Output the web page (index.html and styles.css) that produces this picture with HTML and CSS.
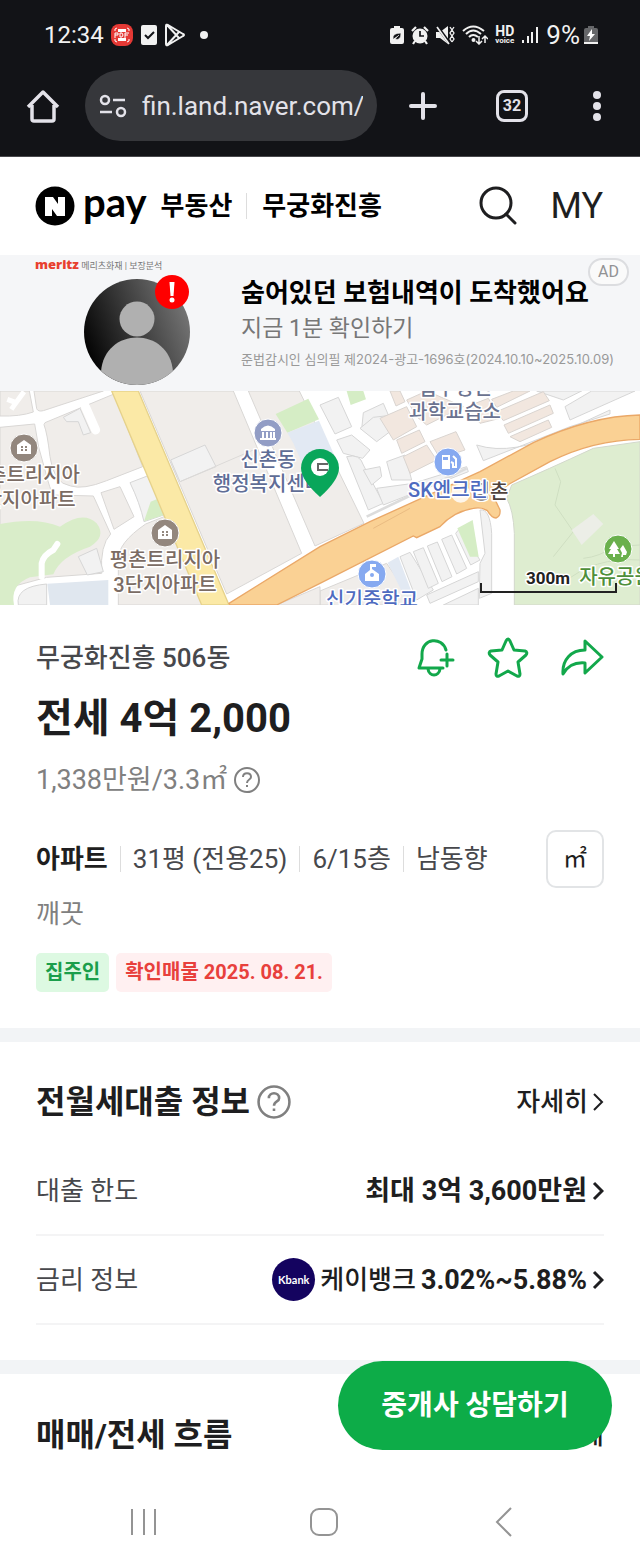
FILE: index.html
```html
<!DOCTYPE html>
<html lang="ko">
<head>
    <meta charset="UTF-8">
    <meta name="viewport" content="width=device-width, initial-scale=1.0">
    <title>무궁화진흥 506동</title>
    <link rel="stylesheet" href="styles.css">
</head>
<body>

<div class="browser">
    <div class="status-bar">
        <div class="status-left">
            <span>12:34</span>
            <svg width="24" height="24" viewBox="0 0 24 24">
                <rect x="1" y="1" width="22" height="22" rx="8" fill="#e53935"/>
                <path d="M5 8V6l2-1M17 5l2 1v2M5 16v2l2 1M17 19l2-1v-2" fill="none" stroke="#fff"/>
                <path d="M8 6h8v3H8zM8 15h8v3H8z" fill="#fff"/>
                <path d="M5 15v-5h3v2H5M10 10v4h2l1-2-1-2zM15 15v-5h4M15 12h3" fill="none" stroke="#fff"/>
            </svg>
            <svg width="18" height="22" viewBox="0 0 18 22">
                <rect x="1" y="1" width="16" height="20" rx="2" fill="#f1f1f1"/>
                <path d="M5 11l3 3 6-6" fill="none" stroke="#121317" stroke-width="2"/>
            </svg>
            <svg class="play" width="22" height="24" viewBox="0 0 22 24" fill="none" stroke="#f1f1f1" stroke-width="2" stroke-linejoin="round">
                <path d="M2 3q0-2 2-1l15 9q2 1 0 2L4 22q-2 1-2-1zM3 2l12 13M3 22L15 9"/>
            </svg>
            <svg width="8" height="8" viewBox="0 0 8 8"><circle cx="4" cy="4" r="4" fill="#f1f1f1"/></svg>
        </div>
        <div class="status-right">
            <svg width="14" height="20" viewBox="0 0 14 20">
                <path d="M4 1h6v2h2q2 0 2 2v12q0 2-2 2H2q-2 0-2-2V5q0-2 2-2h2z" fill="#f1f1f1"/>
                <path d="M3 14q-1-6 8-6 0 8-6 6l4-4" fill="#121317" stroke="#f1f1f1" stroke-width=".7"/>
            </svg>
            <svg width="18" height="20" viewBox="0 0 18 20">
                <circle cx="9" cy="11" r="7.5" fill="#f1f1f1"/>
                <path d="M1 6l4-4M17 6l-4-4M4 16l-2 3M14 16l2 3" stroke="#f1f1f1" stroke-width="2.2"/>
                <path d="M9 6v5h4" fill="none" stroke="#121317" stroke-width="1.7"/>
            </svg>
            <svg width="19" height="20" viewBox="0 0 19 20">
                <path d="M0 7h4l8-6v18l-8-6H0z" fill="#f1f1f1"/>
                <path d="M1 1l13 18" stroke="#121317" stroke-width="3"/>
                <path d="M1 2l12 17" stroke="#f1f1f1" stroke-width="1.7"/>
                <path d="M14 2l2 3-2 3 2 3-2 3 2 3M18 2l-2 3 2 3-2 3 2 3-2 3" fill="none" stroke="#f1f1f1" stroke-width="1.3"/>
            </svg>
            <svg width="26" height="20" viewBox="0 0 26 20" fill="none" stroke="#f1f1f1" stroke-width="2">
                <path d="M1 6q10-9 21 0M4 9q7-7 15 0M7 12q4-4 9 0"/>
                <circle cx="11.500" cy="15" r="1" fill="#f1f1f1"/>
                <path d="M17 11v8M14 16l3 3 3-3M23 18v-7M20 14l3-3 3 3" stroke-width="1.5"/>
            </svg>
            <span class="hd"><b>HD</b><small>voice</small></span>
            <svg width="18" height="18" viewBox="0 0 18 18" stroke="#f1f1f1" stroke-width="2">
                <path d="M2 14v3M7 10v7M11 6v11M16 1v16"/>
            </svg>
            <span class="percent">9%</span>
            <svg width="14" height="20" viewBox="0 0 14 20">
                <path d="M4 1h6v2h2q2 0 2 2v12H0V5q0-2 2-2h2z" fill="#66676a"/>
                <path d="M0 17h14v2H0z" fill="#f1f1f1"/>
                <path d="M8 4l-5 7h3l-1 5 6-7H8z" fill="#fff"/>
            </svg>
        </div>
    </div>

    <div class="toolbar">
        <button class="tool" aria-label="홈">
            <svg width="34" height="34" viewBox="0 0 34 34" fill="none" stroke="#e3e2e9" stroke-width="3.500" stroke-linejoin="round">
                <path d="M2 18L17 3l15 15M6 16v14q0 2 2 2h18q2 0 2-2V16"/>
            </svg>
        </button>
        <label class="address">
            <svg width="28" height="24" viewBox="0 0 28 24" fill="none" stroke="#e3e2e9" stroke-width="2.500">
                <circle cx="6" cy="6" r="4"/>
                <path d="M14 6h12M1 18h12"/>
                <circle cx="22" cy="18" r="4"/>
            </svg>
            <input type="text" value="fin.land.naver.com/article" aria-label="주소">
        </label>
        <button class="tool" aria-label="새 탭">
            <svg width="28" height="28" viewBox="0 0 28 28" stroke="#e3e2e9" stroke-width="4" stroke-linecap="round">
                <path d="M14 2v24M2 14h24"/>
            </svg>
        </button>
        <button class="tabs" aria-label="탭 32개">32</button>
        <button class="tool more" aria-label="메뉴">
            <svg width="8" height="30" viewBox="0 0 8 30" fill="#e3e2e9">
                <circle cx="4" cy="4" r="4"/><circle cx="4" cy="15" r="4"/><circle cx="4" cy="26" r="4"/>
            </svg>
        </button>
    </div>
</div>

<header class="site-header">
    <a class="logo" href="#">
        <svg width="40" height="40" viewBox="0 0 40 40">
            <circle cx="20" cy="20" r="19.500"/>
            <path d="M10 11h8l5 7v-7h7v19h-8l-5-7v7h-7z" fill="#fff"/>
        </svg>
        <span class="pay">pay</span>
        <span>부동산</span>
    </a>
    <a class="complex" href="#">무궁화진흥</a>
    <button class="search" aria-label="검색">
        <svg width="40" height="40" viewBox="0 0 40 40" fill="none" stroke="#1e1e20" stroke-width="3">
            <circle cx="17" cy="17" r="15"/>
            <path d="M27 28l9 9" stroke-linecap="round"/>
        </svg>
    </button>
    <a class="my" href="#">MY</a>
</header>

<section class="ad">
    <div class="ad-visual">
        <p class="ad-brand"><b>meritz</b> 메리츠화재 | 보장분석</p>
        <svg class="avatar" width="108" height="112" viewBox="0 0 108 112">
            <defs>
                <linearGradient id="shade" x1="0" y1=".7" x2="1" y2=".3">
                    <stop offset="0" stop-color="#000"/>
                    <stop offset="1" stop-color="#777"/>
                </linearGradient>
                <clipPath id="face"><circle cx="54" cy="58" r="53"/></clipPath>
            </defs>
            <circle cx="54" cy="58" r="53" fill="url(#shade)"/>
            <g fill="#b0b0b0" clip-path="url(#face)">
                <circle cx="54" cy="45" r="17.500"/>
                <path d="M18 112V98c3-46 69-46 72 0v14z"/>
            </g>
            <circle cx="89" cy="18" r="17" fill="#f00"/>
            <path d="M86.500 8h5l-1 14h-3z" fill="#fff"/>
            <circle cx="89" cy="26" r="2.500" fill="#fff"/>
        </svg>
    </div>
    <div class="ad-copy">
        <h2>숨어있던 보험내역이 도착했어요</h2>
        <p>지금 1분 확인하기</p>
        <small>준법감시인 심의필 제2024-광고-1696호(2024.10.10~2025.10.09)</small>
    </div>
    <span class="ad-badge">AD</span>
</section>

<section class="map">
    <svg viewBox="0 0 640 214" preserveAspectRatio="xMidYMid slice">
        <g transform="translate(0 -1) scale(.33333)">
            <rect width="1920" height="650" fill="#fff"/>
            <!-- blocks west of the avenue -->
            <g class="block">
                <path d="M0 3H88L100 66Q60 80 0 78Z"/>
                <path d="M102 3H310L130 62Q114 66 110 56Z"/>
                <path d="M0 112L104 102Q112 170 135 240Q150 300 160 315L280 318L332 432Q300 465 305 550L140 562L0 600Z"/>
                <path d="M135 98L342 12L428 230L320 272Q250 300 212 288Q160 280 150 200Q142 130 132 104Z"/>
                <path d="M303 308L360 290L402 380L342 418Z"/>
                <path d="M437 402L505 375L620 645H355V510Q352 460 437 402Z"/>
                <path d="M420 3H700L905 490L680 612Z"/>
                <path d="M745 3H898L1092 400L945 468Z"/>
                <path d="M960 603L1160 520L1245 645H960Z"/>
                <path d="M830 645L960 590V645Z"/>
            </g>
            <g class="lot">
                <path d="M390 278L442 258L500 372L432 395Q420 340 390 278Z"/>
                <path d="M190 82L240 55L272 128L250 135L235 95L200 95Z"/>
                <path d="M512 210L615 165L648 230L540 275Z"/>
                <path d="M55 645Q45 590 140 582V645Z"/>
                <path d="M235 500L290 475L310 545L262 555Z"/>
            </g>
            <path d="M540 275L760 180" stroke="#dcdad8" stroke-width="3"/>
            <path d="M22 28L48 38L72 5M48 38L34 58" fill="none" stroke="#fff" stroke-width="15"/>
            <path d="M256 50L287 120" stroke="#fff" stroke-width="27" stroke-linecap="round"/>
            <path d="M142 581L325 570V645H150Z" fill="#e0e7ef"/>
            <path d="M0 402Q110 380 180 410Q250 360 290 400Q320 440 270 470Q180 500 160 553L90 562Q30 585 42 645H0Z" fill="#d9edc9"/>
            <path d="M125 560V520Q130 495 160 480L172 462" fill="none" stroke="#fff" stroke-width="18" stroke-linecap="round"/>
            <path d="M452 335L470 328L492 375L432 394Z" fill="#d5edc5"/>
            <path d="M827 72L925 26L957 88L862 128Z" fill="#d5edc5"/>
            <path d="M862 128L957 92L1005 200L925 262L880 160Z" fill="#e2e9f3"/>
            <path d="M335 3H415L687 645H605Z" fill="#fbe9a6" stroke="#e6d28b" stroke-width="4"/>

            <!-- small lots north of the highway -->
            <g class="lot">
                <path d="M960 45L1015 22L1055 110L1005 132Z"/>
                <path d="M1090 68L1150 40L1165 75L1085 118Z"/>
                <path d="M1010 150L1055 135L1110 180L1088 205L1030 190Z"/>
                <path d="M1040 200Q1080 190 1090 225L1150 340L1105 360Z"/>
                <path d="M1080 115L1120 82L1180 75L1190 110L1130 155Z"/>
                <path d="M1090 240L1140 230L1145 260L1115 285Z"/>
                <path d="M1160 215L1215 195L1235 270L1175 270Z"/>
                <path d="M1130 295L1240 280L1400 230L1405 245L1150 345Z"/>
                <path d="M1430 165Q1540 200 1700 120L1830 60V72L1710 110L1450 212Z"/>
                <path d="M1710 90L1905 3H1775L1695 50Z"/>
                <path d="M1610 3H1745L1690 30Z"/>
            </g>
            <g class="shop">
                <path d="M1170 3H1200L1215 35L1188 48Z"/>
                <path d="M1140 85L1220 50L1250 110L1180 150Z"/>
                <path d="M1190 150L1258 120L1275 155L1205 190Z"/>
                <path d="M1220 30L1280 3L1390 50L1280 105L1250 80Z"/>
                <path d="M1210 200L1280 165L1310 210L1230 250Z"/>
                <path d="M1290 155L1368 125L1395 180L1320 205Z"/>
                <path d="M1400 50L1465 25L1500 85L1440 100Z"/>
                <path d="M1475 28L1540 3H1590L1490 52Z"/>
                <path d="M1490 65L1630 5L1648 32L1510 92Z"/>
                <path d="M1512 105L1650 45L1660 70L1525 130Z"/>
                <path d="M1530 140L1645 90L1655 112L1560 155Z"/>
            </g>
            <path d="M1040 3H1090L1098 28L1052 45Z" fill="#d5edc5"/>
            <path d="M1100 380L1400 235" stroke="#dcdcdc" stroke-width="8"/>

            <!-- south side: lots and park -->
            <path d="M1163 518L1195 500L1250 645H1225Z" fill="#e2e9f3"/>
            <g class="lot">
                <path d="M1200 500L1230 487L1300 600L1250 630Z"/>
                <path d="M1240 485L1270 473L1315 580L1285 595Z"/>
                <path d="M1282 468L1312 456L1356 560L1326 575Z"/>
                <path d="M1325 448L1355 435L1400 535L1370 552Z"/>
                <path d="M1367 430L1378 417L1440 510L1412 525Z"/>
                <path d="M1280 615L1435 545V575L1290 640Z"/>
                <path d="M1330 645L1435 595V645Z"/>
                <path d="M1440 360Q1470 355 1475 430V610L1438 625L1440 520L1455 490Z"/>
            </g>
            <path d="M1372 415L1418 390L1436 500L1410 500Z" fill="#d5edc5"/>
            <path d="M1520 325L1535 285Q1640 240 1780 175L1920 155V645H1543V430Q1540 360 1520 325Z" fill="#deedd0" stroke="#d3d8cc" stroke-width="3"/>
            <path d="M1665 235L1682 275L1665 345L1720 425L1660 500M1750 505Q1800 500 1840 470L1920 465M1690 580Q1780 500 1920 510" fill="none" stroke="#cfdfc2" stroke-width="3"/>
            <path d="M1715 420L1780 372L1810 402L1745 465Z" fill="#eceee7"/>
            <path d="M687 640L960 470L1110 395L1440 245L1600 158Q1770 78 1920 75V148Q1780 150 1650 215L1528 282L1480 318L1500 360Q1502 380 1488 384Q1475 384 1462 362Q1445 350 1420 355Q1360 365 1320 410L1250 443L1240 438L960 580L830 645H690Z" fill="#fad194" stroke="#eaa868" stroke-width="4"/>
            <path d="M1120 415L1230 355" stroke="#e9bb82" stroke-width="3"/>
            <circle cx="1382" cy="310" r="28" fill="#fff" opacity=".8"/>
        </g>

        <!-- points of interest -->
        <g class="poi">
            <circle cx="24" cy="57" r="14" fill="#93877e"/>
            <path d="M17 54l7-5 7 5v9H17z" fill="#fff"/>
            <path d="M22 55v6M26 55v6" stroke="#93877e" stroke-width="2" stroke-dasharray="2 1"/>
            <circle cx="165" cy="142" r="14" fill="#93877e"/>
            <path d="M158 139l7-5 7 5v9h-14z" fill="#fff"/>
            <path d="M163 140v6M167 140v6" stroke="#93877e" stroke-width="2" stroke-dasharray="2 1"/>
            <circle cx="268" cy="42" r="14" fill="#929dc5"/>
            <path d="M261 38q7-7 14 0v2h-14zM262 41h2v6h-2zM266 41h2v6h-2zM270 41h2v6h-2zM273 41h2v6h-2zM260 47h16v2h-16z" fill="#fff"/>
            <circle cx="448" cy="71" r="14" fill="#86a9f0"/>
            <path d="M442 64h8v14h-8z" fill="#fff"/>
            <path d="M443 66h5v3h-5z" fill="#86a9f0"/>
            <path d="M451 71l2 1v4h3v-8l-3-3" fill="none" stroke="#fff" stroke-width="2"/>
            <circle cx="372" cy="183" r="14" fill="#86a9f0"/>
            <path d="M365 183l5-4v-6h6v3h-4v2l7 5v7h-14z" fill="#fff"/>
            <circle cx="372" cy="184" r="2" fill="#86a9f0"/>
            <circle cx="618" cy="158" r="14" fill="#6ab04d"/>
            <path d="M614 150l5 8h-2l3 5h-5v3h-2v-3h-5l3-5h-2zM623 154l4 7-1 3h-3v2h-2l1-4-2-4z" fill="#fff"/>
        </g>
        <g class="label">
            <text x="34" y="91" fill="#7b6c64">촌트리지아</text>
            <text x="24" y="116" fill="#7b6c64">2단지아파트</text>
            <text x="165" y="176" fill="#7b6c64">평촌트리지아</text>
            <text x="165" y="201" fill="#7b6c64">3단지아파트</text>
            <text x="268" y="76" fill="#5f6d96">신촌동</text>
            <text x="268" y="100" fill="#5f6d96">행정복지센터</text>
            <text x="455" y="4" fill="#6b7390">입수영인</text>
            <text x="455" y="28" fill="#6b7390">과학교습소</text>
            <text x="490" y="108" fill="#50433d">평촌</text>
            <text x="448" y="106" fill="#4e6bc0">SK엔크린</text>
            <text x="372" y="216" fill="#4e6bc0">신기중학교</text>
            <text x="616" y="193" fill="#4e8f3a">자유공원</text>
        </g>
        <path d="M481 192v9h135v-9" fill="none" stroke="#222" stroke-width="2"/>
        <text class="scale" x="548" y="193">300m</text>

        <!-- listing pin -->
        <path d="M320 106Q301 89 301 77A19 19 0 0 1 339 77Q339 89 320 106Z" fill="#09a65a"/>
        <circle cx="320" cy="76" r="9" fill="#fff"/>
        <path d="M328 73h-10v6h10" fill="none" stroke="#666" stroke-width="2"/>
    </svg>
</section>

<section class="summary">
    <div class="summary-top">
        <h1>무궁화진흥 506동</h1>
        <div class="actions">
            <button aria-label="알림">
                <svg width="44" height="44" viewBox="0 0 44 44">
                    <path d="M34 14C30 0 10 2 10 18v5L7 32h24M16 33c1 8 11 8 12 0M35 18v12M29 24h12"/>
                </svg>
            </button>
            <button aria-label="관심매물">
                <svg width="44" height="44" viewBox="0 0 44 44">
                    <path d="M20 5q2-4 4 0l4 9 11 1q3 1 1 4l-8 7 2 12q0 3-3 2l-9-5-9 5q-3 1-3-2l2-12-8-7q-2-3 1-4l11-1z"/>
                </svg>
            </button>
            <button aria-label="공유">
                <svg width="44" height="44" viewBox="0 0 44 44">
                    <path d="M25 5l17 16-17 16V27C14 26 7 31 3 38 2 24 11 14 25 14z"/>
                </svg>
            </button>
        </div>
    </div>
    <p class="price">전세 4억 2,000</p>
    <p class="unit-price">1,338만원/3.3㎡
        <button class="help" aria-label="도움말">
            <svg width="28" height="28" viewBox="0 0 28 28"><circle cx="14" cy="14" r="12"/><path d="M10 11c0-5 8-5 8 0 0 3-4 2-4 6M14 19v2"/></svg>
        </button>
    </p>
    <div class="spec-row">
        <ul class="specs">
            <li><strong>아파트</strong></li>
            <li>31평 (전용25)</li>
            <li>6/15층</li>
            <li>남동향</li>
        </ul>
        <button class="unit-toggle">㎡</button>
    </div>
    <p class="desc">깨끗</p>
    <div class="tags">
        <span class="tag owner">집주인</span>
        <span class="tag verified">확인매물 2025. 08. 21.</span>
    </div>
</section>

<section class="loan">
    <div class="section-head">
        <h2>전월세대출 정보</h2>
        <button class="help big" aria-label="도움말">
            <svg width="36" height="36" viewBox="0 0 28 28"><circle cx="14" cy="14" r="12"/><path d="M10 11c0-5 8-5 8 0 0 3-4 2-4 6M14 19v2"/></svg>
        </button>
        <a class="detail" href="#">자세히
            <svg class="chevron thin" width="12" height="20" viewBox="0 0 12 20"><path d="M2 2l8 8-8 8"/></svg>
        </a>
    </div>
    <ul class="loan-list">
        <li>
            <span>대출 한도</span>
            <a href="#"><b>최대 3억 3,600만원</b>
                <svg class="chevron" width="12" height="20" viewBox="0 0 12 20"><path d="M2 2l8 8-8 8"/></svg>
            </a>
        </li>
        <li>
            <span>금리 정보</span>
            <a href="#"><i class="bank">Kbank</i><span class="bank-name">케이뱅크</span> <b>3.02%~5.88%</b>
                <svg class="chevron" width="12" height="20" viewBox="0 0 12 20"><path d="M2 2l8 8-8 8"/></svg>
            </a>
        </li>
    </ul>
</section>

<section class="trend">
    <div class="section-head">
        <h2>매매/전세 흐름</h2>
        <a class="detail" href="#">전체</a>
    </div>
    <button class="consult">중개사 상담하기</button>
</section>

<nav class="system-nav">
    <button aria-label="최근 앱">
        <svg width="30" height="30" viewBox="0 0 30 30"><path d="M3 2v26M15 2v26M26 2v26"/></svg>
    </button>
    <button aria-label="홈 화면">
        <svg width="30" height="30" viewBox="0 0 30 30"><rect x="2" y="2" width="26" height="26" rx="8"/></svg>
    </button>
    <button aria-label="뒤로">
        <svg width="30" height="30" viewBox="0 0 30 30"><path d="M22 1L8 15l14 14"/></svg>
    </button>
</nav>

</body>
</html>
```
FILE: styles.css
```css
* {
    box-sizing: border-box;
}

body {
    margin: 0;
    min-height: 100vh;
    display: flex;
    flex-direction: column;
    font-family: Roboto, "Noto Sans CJK KR", sans-serif;
    font-size: 26px;
    line-height: 36px;
    color: #1e1e20;
    background: #fff;
    overflow-x: hidden;
}

h1, h2, p, ul {
    margin: 0;
    padding: 0;
}

ul {
    list-style: none;
}

a {
    color: inherit;
    text-decoration: none;
}

button {
    display: flex;
    align-items: center;
    justify-content: center;
    padding: 0;
    border: none;
    background: none;
    font: inherit;
    color: inherit;
    cursor: pointer;
}

svg {
    display: block;
    flex: none;
}

/* browser chrome */
.browser {
    background: #121317;
    color: #f1f1f1;
    border-bottom: 1px solid #48484c;
    padding-bottom: 15px;
}

.status-bar {
    display: flex;
    justify-content: space-between;
    align-items: center;
    height: 70px;
    padding: 0 42px 0 44px;
    font-size: 24px;
}

.status-left, .status-right {
    display: flex;
    align-items: center;
    gap: 7px;
}

.status-left {
    gap: 6px;
}

.play {
    margin-right: 8px;
}

.hd {
    display: flex;
    flex-direction: column;
    align-items: center;
    font-size: 14px;
    line-height: 11px;
}

.hd small {
    font-size: 8px;
    line-height: 8px;
    font-weight: bold;
}

.percent {
    margin-right: -3px;
    font-size: 26px;
}

.toolbar {
    display: flex;
    align-items: center;
    height: 71px;
    padding: 0 39px 0 26px;
}

.address {
    display: flex;
    align-items: center;
    gap: 15px;
    flex: 1;
    min-width: 0;
    height: 71px;
    margin: 0 32px 0 25px;
    padding: 0 14px;
    border-radius: 36px;
    background: #36373b;
}

.address input {
    flex: 1;
    min-width: 0;
    padding: 0;
    border: none;
    outline: none;
    background: none;
    font: inherit;
    color: #e3e2e9;
}

.tabs {
    width: 32px;
    height: 32px;
    margin: 0 65px 0 59px;
    border: 3px solid #e3e2e9;
    border-radius: 8px;
    font-size: 16px;
    font-weight: bold;
    color: #e3e2e9;
}

/* site header */
.site-header {
    display: flex;
    align-items: center;
    height: 98px;
    padding: 0 37px 0 35px;
    font-weight: bold;
    color: #000;
}

.logo {
    display: flex;
    align-items: center;
    gap: 8px;
}

.pay {
    font-family: Lato, sans-serif;
    font-size: 40px;
    margin-right: 6px;
    padding-bottom: 8px;
}

.complex {
    margin-left: 14px;
    padding-left: 15px;
    border-left: 1px solid #ddd;
    line-height: 26px;
}

.search {
    margin-left: auto;
}

.my {
    margin-left: 31px;
    font-size: 36px;
    font-weight: normal;
    color: #1e1e20;
}

/* ad banner */
.ad {
    position: relative;
    display: flex;
    height: 136px;
    padding-left: 35px;
    background: #f5f6f8;
}

.ad-visual {
    width: 206px;
    flex: none;
}

.ad-brand {
    height: 18px;
    font-size: 9px;
    line-height: 18px;
    color: #777;
}

.ad-brand b {
    font-family: "Open Sans", sans-serif;
    font-size: 13px;
    font-weight: 800;
    color: #e8402f;
}

.avatar {
    margin: 1px 0 0 48px;
}

.ad-copy {
    padding-top: 20px;
    white-space: nowrap;
}

.ad-copy h2 {
    font-size: 26px;
    line-height: 36px;
    color: #000;
}

.ad-copy p {
    font-size: 23px;
    line-height: 36px;
    color: #777;
}

.ad-copy small {
    display: block;
    font-family: Inter, "Noto Sans CJK KR", sans-serif;
    font-size: 13px;
    line-height: 24px;
    color: #999;
}

.ad-badge {
    position: absolute;
    top: 3px;
    right: 11px;
    width: 41px;
    border: 2px solid #dcdde0;
    border-radius: 14px;
    background: #fafafa;
    font-size: 16px;
    line-height: 24px;
    text-align: center;
    color: #929294;
}

/* map */
.map {
    height: 214px;
    overflow: hidden;
}

.map svg {
    width: 100%;
    height: 100%;
}

.block {
    fill: #f0edea;
    stroke: #d9d7d5;
    stroke-width: 3;
}

.lot {
    fill: #f2f2f2;
    stroke: #d6d6d6;
    stroke-width: 3;
}

.shop {
    fill: #f2e7df;
    stroke: #d9d4d0;
    stroke-width: 3;
}

.poi > circle[r="14"] {
    stroke: #fff;
    stroke-width: 1;
}

.label, .scale {
    text-anchor: middle;
    paint-order: stroke;
    stroke: #fff;
    stroke-width: 3px;
    stroke-linejoin: round;
}

.label {
    font-size: 20px;
    font-weight: 500;
}

.scale {
    font-size: 17px;
    font-weight: bold;
    fill: #222;
}

/* listing summary */
.summary {
    padding: 33px 36px 36px;
    border-bottom: 14px solid #f2f4f6;
}

.summary-top {
    display: flex;
    justify-content: space-between;
    align-items: center;
    height: 40px;
}

.summary-top h1 {
    font-size: 26px;
    font-weight: 500;
    color: #47484c;
}

.actions {
    display: flex;
    gap: 30px;
}

.actions svg {
    fill: none;
    stroke: #12a84b;
    stroke-width: 3;
    stroke-linecap: round;
    stroke-linejoin: round;
}

.price {
    margin-top: 17px;
    font-size: 40px;
    font-weight: bold;
    line-height: 48px;
}

.unit-price {
    display: flex;
    align-items: center;
    gap: 6px;
    margin-top: 19px;
    font-size: 27px;
    color: #808080;
}

.help svg {
    fill: none;
    stroke: #808080;
    stroke-width: 2;
}

.spec-row {
    display: flex;
    justify-content: space-between;
    align-items: center;
    margin-top: 32px;
}

.specs {
    display: flex;
    align-items: center;
    color: #47484c;
}

.specs li {
    line-height: 26px;
}

.specs li + li {
    margin-left: 12px;
    padding-left: 12px;
    border-left: 1px solid #ddd;
}

.specs strong {
    color: #1e1e20;
}

.unit-toggle {
    width: 58px;
    height: 58px;
    border: 2px solid #e2e4e6;
    border-radius: 10px;
    font-size: 24px;
}

.desc {
    margin-top: 8px;
    color: #808080;
}

.tags {
    display: flex;
    gap: 7px;
    margin-top: 21px;
}

.tag {
    padding: 0 9px;
    border-radius: 5px;
    font-size: 20px;
    font-weight: bold;
    line-height: 39px;
}

.owner {
    background: #ddf9e2;
    color: #1b9e4b;
}

.verified {
    background: #fff0f1;
    color: #e8403c;
}

/* loan information */
.loan {
    padding: 36px 36px 35px;
    border-bottom: 14px solid #f2f4f6;
}

.section-head {
    display: flex;
    align-items: center;
    height: 48px;
}

.section-head h2 {
    font-size: 32px;
    line-height: 48px;
}

.help.big {
    margin-left: 6px;
}

.detail {
    display: flex;
    align-items: center;
    gap: 4px;
    margin-left: auto;
    font-weight: 500;
}

.chevron {
    fill: none;
    stroke: #1e1e20;
    stroke-width: 3;
}

.chevron.thin {
    stroke-width: 2;
}

.loan-list {
    margin-top: 21px;
}

.loan-list li {
    display: flex;
    justify-content: space-between;
    align-items: center;
    height: 89px;
    border-bottom: 2px solid #f4f4f5;
    color: #47484c;
}

.loan-list a {
    display: flex;
    align-items: center;
    gap: 5px;
    color: #1e1e20;
}

.loan-list b {
    font-size: 27px;
}

.bank {
    width: 43px;
    height: 43px;
    border-radius: 50%;
    background: #14035f;
    font-family: Lato, sans-serif;
    font-size: 11px;
    font-style: normal;
    font-weight: bold;
    line-height: 43px;
    text-align: center;
    color: #fff;
}

.bank-name {
    font-weight: 500;
}

/* price trend */
.trend {
    position: relative;
    padding: 37px 36px 21px;
}

.consult {
    position: absolute;
    top: -13px;
    right: 28px;
    width: 274px;
    height: 89px;
    border-radius: 45px;
    background: #0dac48;
    font-size: 28px;
    font-weight: bold;
    color: #fff;
}

/* system navigation */
.system-nav {
    display: flex;
    justify-content: space-around;
    align-items: center;
    height: 84px;
    margin-top: auto;
    padding: 0 46px 0 54px;
}

.system-nav svg {
    fill: none;
    stroke: #949494;
    stroke-width: 2;
}
```
